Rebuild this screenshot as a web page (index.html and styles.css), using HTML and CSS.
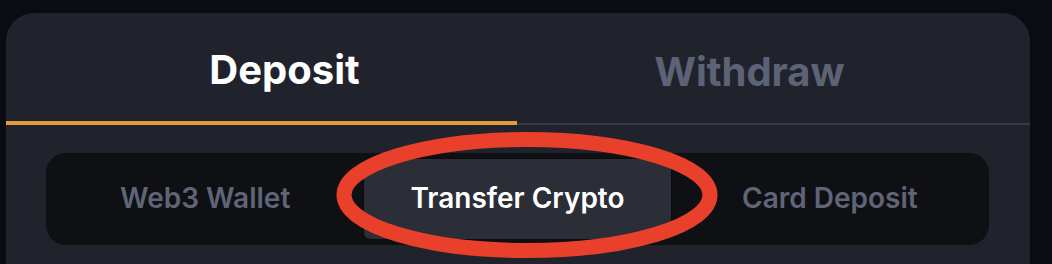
FILE: index.html
```html
<!DOCTYPE html>
<html>
<head>
    <title>Deposit</title>
    <meta name="viewport" content="width=device-width, initial-scale=1.0">
    <link rel="stylesheet" href="styles.css">
</head>
<body>
    <div class="panel">
        <!-- Main tabs -->
        <div class="tabs">
            <div class="tab active">Deposit</div>
            <div class="tab">Withdraw</div>
        </div>

        <!-- Deposit methods -->
        <div class="methods">
            <div class="method">Web3 Wallet</div>
            <div class="method selected">Transfer Crypto</div>
            <div class="method">Card Deposit</div>
        </div>
    </div>

    <!-- Annotation ring -->
    <svg class="ring" width="400" height="140" viewBox="0 0 400 140">
        <ellipse cx="200" cy="70" rx="183" ry="55.5" fill="none" stroke="#e8402a" stroke-width="15"/>
    </svg>
</body>
</html>
```

FILE: styles.css
```css
body {
    margin: 0;
    height: 264px;
    overflow: hidden;
    background: #0b0c11;
    font-family: 'Inter', 'Liberation Sans', sans-serif;
    position: relative;
}
.panel {
    margin: 13px 22px 0 6px;
    height: 251px;
    background: #21232c;
    border-radius: 28px 28px 0 0;
}
.tabs {
    display: flex;
    height: 112px;
    box-shadow: inset 0 -2px 0 #363842;
}
.tab {
    flex: 1;
    display: flex;
    justify-content: center;
    align-items: center;
    padding-top: 4px;
    font-size: 40px;
    font-weight: 700;
    color: #5d6376;
    box-sizing: border-box;
}
.tab:first-child {
    padding-left: 46px;
}
.tab:last-child {
    padding-right: 48px;
}
.tab.active {
    color: #ffffff;
    border-bottom: 4px solid #e59b3a;
}
.methods {
    display: grid;
    grid-template-columns: 1fr 1fr 1fr;
    gap: 6px;
    margin: 28px 41px 0 40px;
    padding: 6px;
    height: 92px;
    box-sizing: border-box;
    background: #0f1014;
    border-radius: 20px;
}
.method {
    display: flex;
    justify-content: center;
    align-items: center;
    padding-bottom: 2px;
    font-size: 28px;
    font-weight: 600;
    color: #5f6577;
    border-radius: 6px;
}
.method.selected {
    background: #2b2d37;
    color: #ffffff;
    box-shadow: 0 0 3px rgba(0, 0, 0, 0.6);
}
.ring {
    position: absolute;
    left: 327px;
    top: 125px;
}
```
